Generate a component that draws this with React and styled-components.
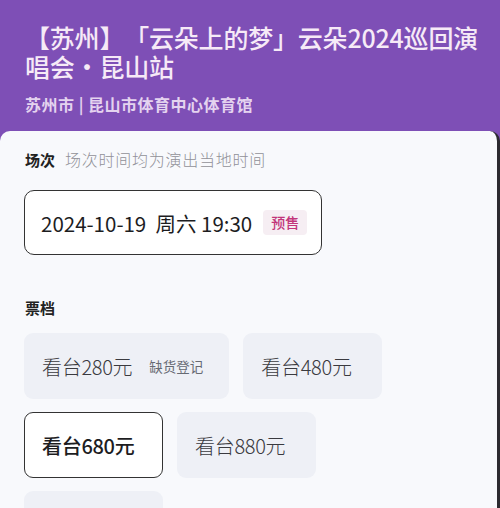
import React from 'react';
import styled, { createGlobalStyle } from 'styled-components';

const Global = createGlobalStyle`
  html, body {
    margin: 0;
    padding: 0;
    background: #f8f9fc;
  }
  body {
    font-family: "Noto Sans CJK SC", "Noto Sans", sans-serif;
    text-spacing-trim: space-all;
  }
`;

const Page = styled.div`
  width: 500px;
  height: 508px;
  overflow: hidden;
  background: #7e4fb6;
`;

const Header = styled.div`
  padding: 23px 14px 0 25px;
  height: 108px;
  box-sizing: border-box;
`;

const Title = styled.h1`
  margin: 0;
  font-size: 25px;
  line-height: 29px;
  font-weight: 500;
  color: #f6eaf7;
  letter-spacing: -0.2px;
`;

const Venue = styled.p`
  margin: 13px 0 0;
  font-size: 16px;
  line-height: 20px;
  font-weight: 700;
  color: #e4d3ef;
  letter-spacing: 0.5px;
`;

const Panel = styled.div`
  background: #f8f9fc;
  border-radius: 10px 10px 0 0;
  border-right: 3px solid #2c2a30;
  margin-top: 23px;
  padding: 16px 0 0 24px;
  height: 400px;
  box-sizing: border-box;
`;

const SectionHead = styled.div`
  display: flex;
  align-items: baseline;
  gap: 10px;
  margin-left: 1px;
  margin-top: ${(p) => p.$top || 0}px;
`;

const Label = styled.span`
  font-size: 15px;
  font-weight: 700;
  color: #222;
`;

const Hint = styled.span`
  font-size: 16px;
  font-weight: 300;
  color: #919198;
  letter-spacing: 0.75px;
`;

const Session = styled.div`
  display: flex;
  align-items: center;
  gap: 11px;
  margin-top: 19px;
  width: 298px;
  height: 65px;
  box-sizing: border-box;
  padding: 0 0 0 16px;
  border: 1.5px solid #333;
  border-radius: 10px;
  background: #fff;
  white-space: nowrap;
`;

const SessionText = styled.span`
  font-size: 20.5px;
  color: #1d1d1f;
  white-space: pre;
  letter-spacing: 0;
`;

const Badge = styled.span`
  flex-shrink: 0;
  font-size: 14px;
  line-height: 17px;
  font-weight: 500;
  color: #c2357a;
  background: #f6eef3;
  border-radius: 4px;
  padding: 4px 8px;
`;

const Grid = styled.div`
  display: flex;
  flex-wrap: wrap;
  gap: 13px 14px;
  margin-top: 15px;
  width: 400px;
`;

const Ticket = styled.div`
  display: flex;
  align-items: center;
  gap: 17px;
  height: 66px;
  box-sizing: border-box;
  padding: 0 17px;
  border-radius: 9px;
  background: ${(p) => (p.$selected ? '#fff' : '#eef0f6')};
  border: 1.5px solid ${(p) => (p.$selected ? '#333' : 'transparent')};
  min-width: 139px;
`;

const Price = styled.span`
  font-size: 20px;
  font-weight: ${(p) => (p.$selected ? 500 : 300)};
  color: ${(p) => (p.$selected ? '#1d1d1f' : '#3a3a3f')};
  letter-spacing: -0.3px;
`;

const Note = styled.span`
  font-size: 13.5px;
  color: #666a73;
  padding-right: 8px;
`;

const tickets = [
  { price: '看台280元', note: '缺货登记' },
  { price: '看台480元' },
  { price: '看台680元', selected: true },
  { price: '看台880元' },
  { price: '看台1080元' },
];

export default function App() {
  return (
    <Page>
      <Global />
      <Header>
        <Title>【苏州】「云朵上的梦」云朵2024巡回演唱会·昆山站</Title>
        <Venue>苏州市 | 昆山市体育中心体育馆</Venue>
      </Header>
      <Panel>
        <SectionHead>
          <Label>场次</Label>
          <Hint>场次时间均为演出当地时间</Hint>
        </SectionHead>
        <Session>
          <SessionText>2024-10-19  周六 19:30</SessionText>
          <Badge>预售</Badge>
        </Session>
        <SectionHead $top={42}>
          <Label>票档</Label>
        </SectionHead>
        <Grid>
          {tickets.map((t) => (
            <Ticket key={t.price} $selected={t.selected}>
              <Price $selected={t.selected}>{t.price}</Price>
              {t.note && <Note>{t.note}</Note>}
            </Ticket>
          ))}
        </Grid>
      </Panel>
    </Page>
  );
}
